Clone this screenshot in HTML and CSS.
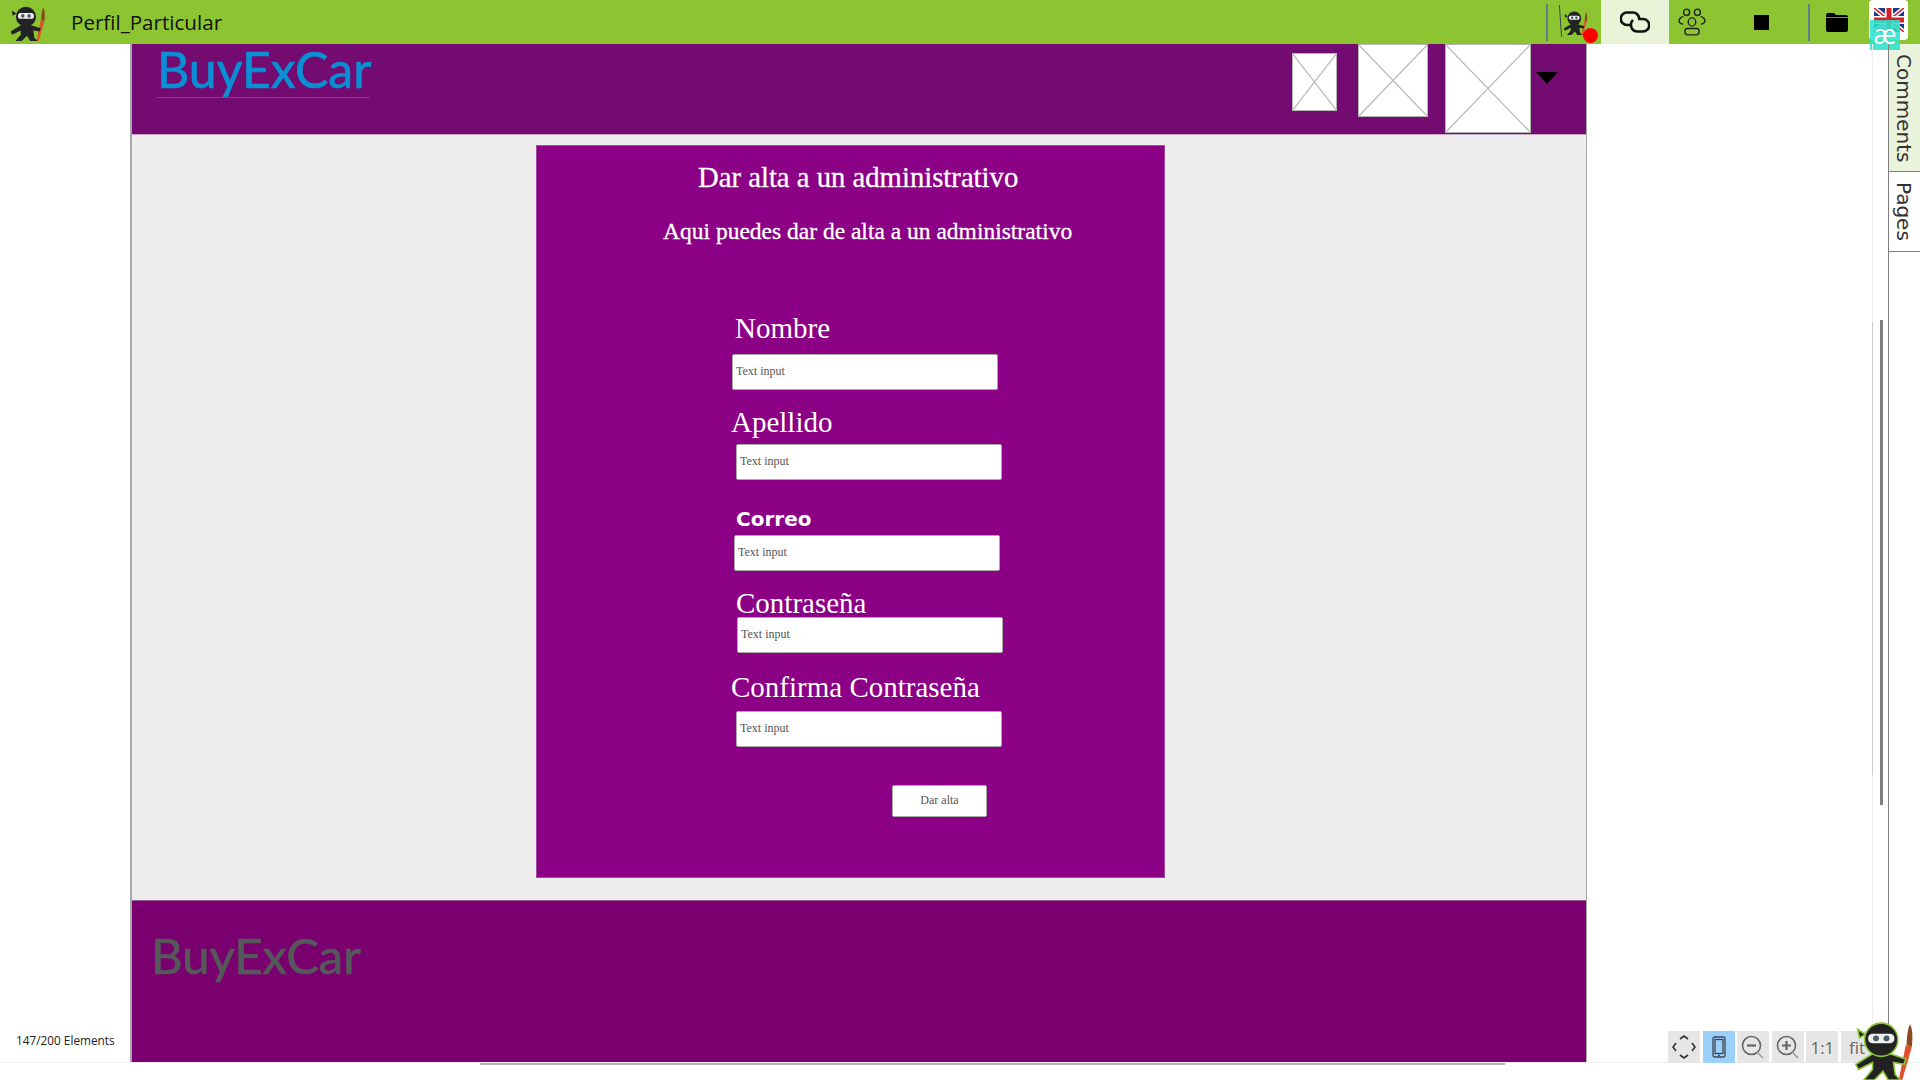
FILE: index.html
```html
<!DOCTYPE html>
<html lang="en">
<head>
    <meta charset="UTF-8">
    <title>Perfil_Particular</title>
    <link rel="stylesheet" href="styles.css">
</head>
<body>
    <svg class="defs" width="0" height="0">
        <symbol id="ninja" viewBox="0 0 36 36">
            <path d="M27 36 L31 16 L34.500 17 L29 36 Z" fill="#e0502a" stroke="none"/>
            <path d="M31.500 16 Q31.500 8 33.500 4 Q35.500 8 34.500 17 Z" fill="#8a4b22" stroke="none"/>
            <path d="M8 10 L3.500 7 L4.500 12 Z" fill="#222"/>
            <path d="M12 21 H22 L31 24 L30 27 L24 26 L25 33 L28 36 H21 L18 31 L13 36 H7 L12 30 L12 26 L4 30 L2.500 27 Z" fill="#222"/>
            <circle cx="17" cy="13" r="9.500" fill="#222"/>
            <rect x="9.500" y="9.500" width="15" height="5.500" rx="2.500" fill="#eee" stroke="none"/>
            <circle cx="14" cy="12.200" r="1.700" fill="#4a5a68" stroke="none"/>
            <circle cx="20" cy="12.200" r="1.700" fill="#4a5a68" stroke="none"/>
        </symbol>
        <symbol id="placeholder" viewBox="0 0 100 100" preserveAspectRatio="none">
            <rect x="0" y="0" width="100" height="100" fill="#fff" stroke="#b5b5b5" stroke-width="2" vector-effect="non-scaling-stroke"/>
            <path d="M0 0 L100 100 M100 0 L0 100" stroke="#bbb" stroke-width="1.300" vector-effect="non-scaling-stroke"/>
        </symbol>
    </svg>

    <div class="topbar">
        <svg class="app-logo"><use href="#ninja"/></svg>
        <div class="doc-name">Perfil_Particular</div>
        <div class="tools">
            <span class="sep"></span>
            <div class="tool tool-ninja">
                <span class="stick"></span>
                <svg class="small-ninja"><use href="#ninja"/></svg>
                <span class="red-dot"></span>
            </div>
            <div class="tool tool-link">
                <svg width="30" height="22" viewBox="0 0 30 22" fill="none" stroke="#111" stroke-width="2.600">
                    <path d="M12 14 H7 A6 6 0 0 1 7 1.500 H13 A6 6 0 0 1 19 7.500"/>
                    <path d="M18 8 H23 A6 6 0 0 1 23 20.500 H17 A6 6 0 0 1 11 14.500 A6 6 0 0 1 13 9"/>
                </svg>
            </div>
            <div class="tool tool-people">
                <svg width="28" height="28" viewBox="0 0 26 26" fill="none" stroke="#222" stroke-width="1.300">
                    <ellipse cx="8" cy="4" rx="2.800" ry="3"/>
                    <ellipse cx="18" cy="4" rx="2.800" ry="3"/>
                    <ellipse cx="13" cy="13" rx="3.500" ry="3.800"/>
                    <path d="M5 8 Q1 9 1 12 Q1.500 15 5 15"/>
                    <path d="M21 8 Q25 9 25 12 Q24.500 15 21 15"/>
                    <path d="M8 19 H18 Q20 20 19.500 23 Q19 25 17 25 H9 Q7 25 6.500 23 Q6 20 8 19 Z"/>
                </svg>
            </div>
            <div class="tool tool-stop"><span class="stop"></span></div>
            <span class="sep"></span>
            <div class="tool tool-folder">
                <svg width="22" height="19" viewBox="0 0 22 19"><path d="M0 2 Q0 0 2 0 H8 L10 2 H20 Q22 2 22 4 V17 Q22 19 20 19 H2 Q0 19 0 17 Z" fill="#000"/><path d="M0 4.500 H22" stroke="#8cc531" stroke-width=".8"/></svg>
            </div>
            <div class="tool tool-flag">
                <svg width="30" height="24" viewBox="0 0 30 24">
                    <rect width="30" height="24" fill="#1f3a8c"/>
                    <path d="M0 0 L30 24 M30 0 L0 24" stroke="#fff" stroke-width="4.500"/>
                    <path d="M0 0 L30 24 M30 0 L0 24" stroke="#d2222c" stroke-width="1.600"/>
                    <path d="M15 0 V24 M0 12 H30" stroke="#fff" stroke-width="8"/>
                    <path d="M15 0 V24 M0 12 H30" stroke="#d2222c" stroke-width="5"/>
                </svg>
            </div>
        </div>
    </div>
    <div class="ae-badge">æ</div>

    <div class="workspace">
        <div class="gutter">
            <div class="count">147/200 Elements</div>
        </div>
        <div class="page">
            <header class="page-header">
                <div class="logo">BuyExCar</div>
                <svg class="ph ph-a"><use href="#placeholder"/></svg>
                <svg class="ph ph-b"><use href="#placeholder"/></svg>
                <svg class="ph ph-c"><use href="#placeholder"/></svg>
                <span class="caret"></span>
            </header>
            <main class="content">
                <section class="card">
                    <h1>Dar alta a un administrativo</h1>
                    <h2>Aqui puedes dar de alta a un administrativo</h2>
                    <div class="label l-nombre">Nombre</div>
                    <div class="input i-nombre">Text input</div>
                    <div class="label l-apellido">Apellido</div>
                    <div class="input i-apellido">Text input</div>
                    <div class="label l-correo">Correo</div>
                    <div class="input i-correo">Text input</div>
                    <div class="label l-contra">Contraseña</div>
                    <div class="input i-contra">Text input</div>
                    <div class="label l-confirma">Confirma Contraseña</div>
                    <div class="input i-confirma">Text input</div>
                    <div class="btn">Dar alta</div>
                </section>
            </main>
            <footer class="page-footer">
                <div class="logo logo-grey">BuyExCar</div>
            </footer>
        </div>
        <aside class="side">
            <div class="tab tab-comments">Comments</div>
            <div class="tab tab-pages">Pages</div>
        </aside>
    </div>
    <div class="hscroll-row"><span class="hscroll"></span></div>

    <div class="panel-edge"></div>
    <div class="track"></div>
    <div class="vscroll"></div>

    <div class="view-tools">
        <div class="vt">
            <svg width="24" height="24" viewBox="0 0 24 24" fill="none" stroke="#333" stroke-width="1.600"><path d="M8 4 L12 1 L16 4 M8 20 L12 23 L16 20 M4 8 L1 12 L4 16 M20 8 L23 12 L20 16"/></svg>
        </div>
        <div class="vt vt-on">
            <svg width="14" height="22" viewBox="0 0 14 22" fill="none" stroke="#445" stroke-width="1.300"><rect x="1" y="1" width="12" height="20" rx="1.500"/><rect x="3" y="3.500" width="8" height="14"/><circle cx="7" cy="19.500" r=".4"/></svg>
        </div>
        <div class="vt">
            <svg width="24" height="24" viewBox="0 0 24 24" fill="none" stroke="#666" stroke-width="1.600"><circle cx="10.500" cy="10.500" r="9"/><path d="M16 17 L22 23" stroke="#999"/><path d="M6 10.500 H15" stroke-width="2.200"/></svg>
        </div>
        <div class="vt">
            <svg width="24" height="24" viewBox="0 0 24 24" fill="none" stroke="#666" stroke-width="1.600"><circle cx="10.500" cy="10.500" r="9"/><path d="M16 17 L22 23" stroke="#999"/><path d="M6 10.500 H15 M10.500 6 V15" stroke-width="2.200"/></svg>
        </div>
        <div class="vt vt-text">1:1</div>
        <div class="vt vt-text">fit</div>
    </div>
    <svg class="big-ninja"><use href="#ninja"/></svg>
</body>
</html>
```

FILE: styles.css
```css
html, body {
    margin: 0;
    height: 1080px;
    overflow: hidden;
    background: #fff;
}

body {
    font-family: 'Open Sans', sans-serif;
    display: flex;
    flex-direction: column;
    position: relative;
}

.defs {
    position: absolute;
}

.topbar {
    height: 44px;
    flex: none;
    display: flex;
    align-items: center;
    background: #8cc531;
}

.app-logo {
    width: 38px;
    height: 38px;
    margin-left: 8px;
}

.doc-name {
    margin-left: 25px;
    font-size: 20.600px;
    color: #111;
}

.tools {
    margin-left: auto;
    display: flex;
    align-items: center;
    height: 44px;
    margin-right: 12px;
}

.sep {
    width: 2px;
    height: 37px;
    background: #5f7f8f;
}

.tool {
    display: flex;
    align-items: center;
    justify-content: center;
    height: 44px;
    position: relative;
}

.tool-ninja {
    width: 53px;
}

.stick {
    position: absolute;
    left: 12px;
    top: 5px;
    width: 1px;
    height: 32px;
    background: #445;
    transform: rotate(-4deg);
}

.small-ninja {
    width: 26px;
    height: 30px;
}

.red-dot {
    position: absolute;
    right: 3px;
    bottom: 1px;
    width: 15px;
    height: 15px;
    border-radius: 50%;
    background: #f00;
}

.tool-link {
    width: 68px;
    background: #e8f3d8;
}

.tool-people {
    width: 46px;
}

.tool-stop {
    width: 93px;
}

.stop {
    width: 15px;
    height: 15px;
    background: #000;
}

.tool-folder {
    width: 54px;
}

.tool-flag {
    width: 39px;
    height: 40px;
    margin: -4px 0 0 5px;
    background: #fff;
    border-radius: 4px;
}

.ae-badge {
    position: absolute;
    left: 1870px;
    top: 20px;
    width: 30px;
    height: 30px;
    background: rgba(45, 225, 205, 0.88);
    color: #fff;
    font-size: 27px;
    line-height: 28px;
    text-align: center;
}

.workspace {
    height: 1018px;
    flex: none;
    display: flex;
}

.gutter {
    width: 130px;
    flex: none;
    display: flex;
    align-items: flex-end;
}

.count {
    margin: 0 0 14px 16px;
    font-size: 11.800px;
    color: #222;
}

.page {
    width: 1457px;
    flex: none;
    display: flex;
    flex-direction: column;
    border-left: 2px solid #a8a8a8;
    border-right: 1px solid #a8a8a8;
    box-sizing: border-box;
}

.page-header {
    height: 90px;
    flex: none;
    display: flex;
    background: #730b71;
    border-bottom: 1px solid #c9a5c8;
}

.logo {
    font-family: 'Lato', sans-serif;
    font-size: 50px;
    line-height: 1;
    -webkit-text-stroke: 0.7px currentColor;
    color: #0b8fd4;
    margin: 0 0 0 25px;
    height: 53px;
    border-bottom: 1px solid #2b62a8;
    width: 213px;
    white-space: nowrap;
}

.ph {
    flex: none;
}

.ph-a {
    width: 45px;
    height: 58px;
    margin: 9px 0 0 922px;
}

.ph-b {
    width: 70px;
    height: 73px;
    margin-left: 21px;
}

.ph-c {
    width: 86px;
    height: 89px;
    margin-left: 17px;
}

.caret {
    width: 0;
    height: 0;
    margin: 28px 0 0 5px;
    border-left: 11px solid transparent;
    border-right: 11px solid transparent;
    border-top: 12px solid #000;
}

.content {
    height: 765px;
    flex: none;
    background: #eee;
    padding: 10px 0 0 404px;
    box-sizing: border-box;
}

.card {
    width: 629px;
    height: 733px;
    background: #8b0085;
    color: #fff;
    font-family: 'Liberation Serif', serif;
    display: flow-root;
    box-sizing: border-box;
    border: 1px solid #a24a9f;
}

h1 {
    margin: 14px 0 0 161px;
    font-size: 28.700px;
    font-weight: 400;
    line-height: 34px;
    white-space: nowrap;
    -webkit-text-stroke: 0.3px #fff;
}

h2 {
    margin: 23px 0 0 126px;
    font-size: 23.500px;
    font-weight: 400;
    line-height: 28px;
    white-space: nowrap;
    -webkit-text-stroke: 0.3px #fff;
}

.label {
    font-size: 29px;
    line-height: 32px;
    white-space: nowrap;
}

.input {
    width: 266px;
    height: 36px;
    box-sizing: border-box;
    background: #fff;
    border: 1px solid #aaa;
    border-radius: 2px;
    color: #555;
    font-size: 12px;
    line-height: 33px;
    padding-left: 3px;
}

.l-nombre { margin: 67px 0 0 198px; }
.i-nombre { margin: 10px 0 0 195px; }
.l-apellido { margin: 16px 0 0 194px; }
.i-apellido { margin: 6px 0 0 199px; }
.l-correo {
    margin: 24px 0 0 199px;
    font-family: 'DejaVu Sans', sans-serif;
    font-weight: 700;
    font-size: 20px;
    line-height: 30px;
}
.i-correo { margin: 1px 0 0 197px; }
.l-contra { margin: 16px 0 0 199px; }
.i-contra { margin: -2px 0 0 200px; }
.l-confirma { margin: 18px 0 0 194px; }
.i-confirma { margin: 8px 0 0 199px; }

.btn {
    width: 95px;
    height: 32px;
    margin: 38px 0 0 355px;
    background: #fff;
    border-radius: 2px;
    border: 1px solid #aaa;
    box-sizing: border-box;
    color: #555;
    font-size: 12px;
    line-height: 28px;
    text-align: center;
}

.page-footer {
    height: 162px;
    flex: none;
    background: #7a006f;
    border-top: 1px solid #965a92;
    box-sizing: border-box;
}

.logo-grey {
    color: #55595a;
    border: none;
    margin: 30px 0 0 19px;
    font-size: 49px;
}

.side {
    flex: 1;
    display: flex;
    flex-direction: column;
    align-items: flex-end;
}

.tab {
    writing-mode: vertical-rl;
    width: 32px;
    box-sizing: border-box;
    border-bottom: 1px solid #808080;
    font-family: 'DejaVu Sans', sans-serif;
    font-size: 20px;
    color: #333;
    line-height: 32px;
}

.tab-comments {
    height: 128px;
    padding-top: 10px;
    background: #eaf3dc;
}

.tab-pages {
    height: 80px;
    padding-top: 10px;
}

.hscroll-row {
    height: 18px;
    flex: none;
    border-top: 1px solid #eee;
    box-sizing: border-box;
}

.hscroll {
    display: block;
    width: 1025px;
    height: 2px;
    margin-left: 480px;
    background: #b5b5b5;
}

.panel-edge {
    position: absolute;
    left: 1888px;
    top: 44px;
    bottom: 0;
    width: 1px;
    background: #808080;
}

.track {
    position: absolute;
    left: 1872px;
    top: 44px;
    height: 987px;
    width: 1px;
    background: linear-gradient(#eee 278px, #ccc 278px, #ccc 731px, #eee 731px);
}

.vscroll {
    position: absolute;
    left: 1880px;
    top: 320px;
    width: 3px;
    height: 485px;
    background: #808080;
}

.view-tools {
    position: absolute;
    left: 1668px;
    top: 1031px;
    display: flex;
    gap: 2.600px;
}

.vt {
    width: 32px;
    height: 32px;
    background: #e6e6e6;
    display: flex;
    align-items: center;
    justify-content: center;
    color: #666;
    font-size: 17px;
}

.vt-on {
    background: #9bd0fb;
}

.big-ninja {
    position: absolute;
    left: 1850px;
    top: 1017px;
    width: 66px;
    height: 63px;
    stroke: #8cc531;
    stroke-width: 0.9px;
}
```
